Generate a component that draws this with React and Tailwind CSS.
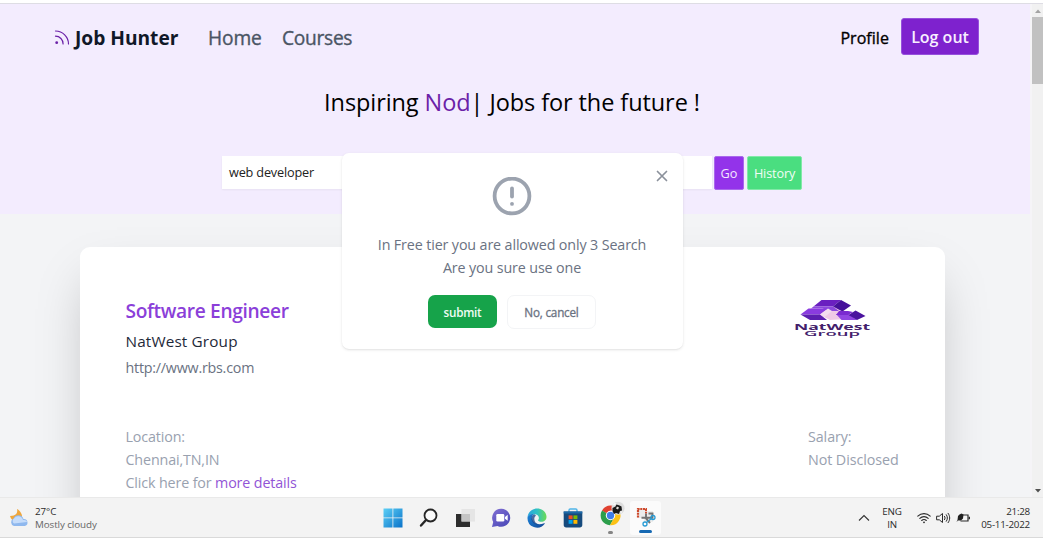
import React from 'react';

const RssIcon = () => (
  <svg viewBox="0 0 16 16" className="h-4 w-4" fill="none" stroke="#6b21a8" strokeWidth="1.2">
    <path d="M1.500 1A13 13 0 0 1 14.500 14M1.500 6.200a7.600 7.600 0 0 1 7.600 7.800" strokeLinecap="round" />
    <circle cx="2.700" cy="12.700" r="1.400" fill="#6b21a8" stroke="none" />
  </svg>
);

const NatWestLogo = () => (
  <svg viewBox="0 0 78 40" className="h-10 w-[78px]">
    <path d="m30 9 12-1 12 5 1 7-18 1-12-6z" fill="#efc9e6" />
    <path d="M28.500 1H48l-8 6.500H20.500z" fill="#6a1fc0" />
    <path d="M20.500 7.500H40l6 4.500H34l-4-2.500H18z" fill="#8d49dd" />
    <path d="m48 1 10 5.500-8.500 6L40 7.500z" fill="#45109a" />
    <path d="M15.500 9.500H35l-8 6H7.500z" fill="#8a3bdf" />
    <path d="M7.500 15.500H27l7 5.500H17z" fill="#5c1fb0" />
    <path d="m35 9.500 4 2.500-7.500 6-4.500-2.500z" fill="#f3dcef" />
    <path d="M43 15h12.500l8.500 6H48.500z" fill="#9146e2" />
    <path d="m62.500 11.500 10 5.500-8.500 4-8.500-5z" fill="#4a139e" />
    <path d="m46 12 9 0 5 1-5 3H43z" fill="#7a2ad0" />
    <text x="1" y="30.500" textLength="76" lengthAdjust="spacingAndGlyphs" fontSize="8" fontWeight="700" fill="#43206b" fontFamily="Open Sans, sans-serif">NatWest</text>
    <text x="11" y="37.300" textLength="56" lengthAdjust="spacingAndGlyphs" fontSize="7.200" fontWeight="600" fill="#43206b" fontFamily="Open Sans, sans-serif">Group</text>
  </svg>
);

const WeatherIcon = () => (
  <svg viewBox="0 0 20 20" className="h-5 w-5">
    <path d="M8 1c1 4-1 7-7 7 1 4 4 6 8 5 4-1 5-5 3-8-1-2-2-3-4-4z" fill="#f0a63a" />
    <path d="M5 18a4 4 0 0 1-.5-7.500A5.300 5.300 0 0 1 14.500 11 3.600 3.600 0 0 1 16 18z" fill="#8fb8ee" />
    <path d="M5 15.500a3 3 0 0 1 0-5 5 5 0 0 1 9 1.500c3-.5 4 1 4 2z" fill="#c5dcfa" />
  </svg>
);

const WindowsIcon = () => (
  <svg viewBox="0 0 20 20" className="h-5 w-5">
    <defs>
      <linearGradient id="win" x1="0" y1="0" x2="20" y2="20" gradientUnits="userSpaceOnUse">
        <stop stopColor="#5ed2f7" /><stop offset="1" stopColor="#0870c8" />
      </linearGradient>
    </defs>
    <path d="M.5.5h9v9h-9zM10.300.5h9.200v9h-9.200zM.5 10.300h9v9.200h-9zM10.300 10.300h9.200v9.200h-9.200z" fill="url(#win)" />
  </svg>
);

const SearchIcon = () => (
  <svg viewBox="0 0 20 20" className="h-5 w-5" fill="none" stroke="#262626" strokeLinecap="round">
    <circle cx="11.500" cy="7.500" r="6" strokeWidth="1.800" fill="#fafafa" />
    <path d="m7 12-5 5.500" strokeWidth="2.400" />
  </svg>
);

const TaskViewIcon = () => (
  <svg viewBox="0 0 20 20" className="h-5 w-5">
    <path d="M1 6h14v13H1z" fill="#2d2d2d" />
    <path d="M6.500 1H20v12.500H6.500z" fill="#e2e2e2" fillOpacity=".88" />
    <path d="M6.500 6H15v7.500H6.500z" fill="#c4c4c4" />
  </svg>
);

const ChatIcon = () => (
  <svg viewBox="0 0 20 20" className="h-5 w-5">
    <defs>
      <linearGradient id="chat" x1="3" y1="2" x2="16" y2="19" gradientUnits="userSpaceOnUse">
        <stop stopColor="#7c6bd0" /><stop offset="1" stopColor="#4b49b8" />
      </linearGradient>
    </defs>
    <path d="M10.500.8a9 9 0 1 1-4 17.200L1 19l1.200-5A9 9 0 0 1 10.500.8z" fill="url(#chat)" />
    <rect x="5.300" y="6" width="8" height="7.500" rx="1.300" fill="#fff" />
    <path d="m14 9 2.700-2.300v6L14 10.700z" fill="#fff" />
  </svg>
);

const EdgeIcon = () => (
  <svg viewBox="0 0 20 20" className="h-5 w-5">
    <defs>
      <linearGradient id="edgeA" x1="1" y1="5" x2="19" y2="6" gradientUnits="userSpaceOnUse">
        <stop stopColor="#2aa5dc" /><stop offset=".5" stopColor="#2fc2c4" /><stop offset="1" stopColor="#69d95a" />
      </linearGradient>
      <linearGradient id="edgeB" x1="1" y1="8" x2="14" y2="19" gradientUnits="userSpaceOnUse">
        <stop stopColor="#1b7fd4" /><stop offset="1" stopColor="#14509e" />
      </linearGradient>
    </defs>
    <path d="M.5 9.500C1 4.200 5 .5 10.200.5c5.500 0 9.300 4 9.300 8.200 0 3.200-2.300 5-5 5-2.200 0-3.500-.7-3.500-1.500 0-.6.900-.8.900-2.300 0-2-1.900-3.600-4.500-3.600C4 6.300 1.300 7.500.5 9.500z" fill="url(#edgeA)" />
    <path d="M.5 9.500C1.300 7 3.900 5.700 7 6c-2.300 1.400-2.800 4-1.500 6.600 1.700 3.300 6.500 4.800 11.700 2.600.5-.2.800.1.500.6A9.600 9.600 0 0 1 .5 9.500z" fill="url(#edgeB)" />
    <path d="M7.400 6.300c-3.300 1.200-3.700 4.300-2 7.100 1.500 2.300 4 3.300 6.900 3.100-3-.5-5-2.600-5-5.500 0-1.500.6-2.600 1.800-3.200z" fill="#103f87" fillOpacity=".75" />
  </svg>
);

const StoreIcon = () => (
  <svg viewBox="0 0 20 20" className="h-5 w-5">
    <path d="M6 5V2.200C6 1.400 6.400 1 7.200 1h5.600c.8 0 1.200.4 1.200 1.200V5" fill="none" stroke="#50b5e8" strokeWidth="1.400" />
    <path d="M.7 3.500h18.600V17c0 1.600-.9 2.500-2.500 2.500H3.200c-1.600 0-2.500-.9-2.500-2.500z" fill="#164a7d" />
    <path d="M.7 3.500h18.600v2H.7z" fill="#1c69a8" />
    <path d="M5.600 7.400h4v3.800h-4z" fill="#f25022" />
    <path d="M10.400 7.400h4v3.800h-4z" fill="#7fba00" />
    <path d="M5.600 12h4v3.800h-4z" fill="#00a4ef" />
    <path d="M10.400 12h4v3.800h-4z" fill="#ffb900" />
  </svg>
);

const ChromeIcon = () => (
  <svg viewBox="0 0 25 25" className="h-[25px] w-[25px]">
    <path d="M10.500 14.500 2 9.700a9.700 9.700 0 0 1 17-.2h-8.500z" fill="#e0402f" />
    <path d="M10.500 14.500 2 9.500A9.800 9.800 0 0 0 10 24.300l4.500-8z" fill="#2c9e4b" />
    <path d="m10.500 14.500 8.700-4.800A9.800 9.800 0 0 1 10 24.300l4.500-8z" fill="#fbc116" />
    <circle cx="10.500" cy="14.500" r="4.700" fill="#fff" />
    <circle cx="10.500" cy="14.500" r="3.700" fill="#3f7de8" />
    <circle cx="18" cy="7.200" r="6.500" fill="#dcdcdc" />
    <path d="m12.500 7 3-1.500 1-2 3 1 2 1 .5 4-2 .5-1 3-3-1-2 1-1.500-3z" fill="#171717" />
    <path d="m17 5.500 2 1-1 2-2-1z" fill="#e2ded8" />
    <path d="m12.500 4 2-2 2 .5-2 2zM20 11l2.500-1-1 2z" fill="#fafafa" />
  </svg>
);

const SnipIcon = () => (
  <svg viewBox="0 0 20 20" className="h-5 w-5" fill="none">
    <path d="M1 1h10v3h6v11H8v-4H1z" fill="#ececec" />
    <path d="M2 10.500V2h9" stroke="#cf4a2d" strokeWidth="2.200" strokeDasharray="2 .7" />
    <path d="M10 2v4.500" stroke="#cf4a2d" strokeWidth="2" strokeDasharray="2 .7" />
    <path d="M10 6.500v5l4 4.500M5.500 10.800h8l3 0V6.500h-4" stroke="#747474" strokeWidth="1.900" />
    <circle cx="17" cy="10.500" r="2" stroke="#279bd4" strokeWidth="1.300" />
    <circle cx="9" cy="17" r="2" stroke="#279bd4" strokeWidth="1.300" />
    <path d="m10.500 15.500 5-4" stroke="#279bd4" strokeWidth="1.300" />
  </svg>
);

const WifiIcon = () => (
  <svg viewBox="0 0 14 12" className="h-3 w-3.5" fill="none" stroke="#2b2b2b" strokeWidth="1.1" strokeLinecap="round">
    <path d="M.8 4.200c3.500-3.500 8.900-3.500 12.400 0M2.800 6.400c2.400-2.400 6-2.400 8.400 0M4.700 8.500c1.300-1.300 3.300-1.300 4.600 0" />
    <circle cx="7" cy="10.300" r=".9" fill="#2b2b2b" stroke="none" />
  </svg>
);

const SoundIcon = () => (
  <svg viewBox="0 0 15 12" className="h-3 w-[15px]" fill="none" stroke="#2b2b2b" strokeWidth="1" strokeLinecap="round" strokeLinejoin="round">
    <path d="M1 4.200h2.300L6.500 1.500v9L3.300 7.800H1zM8.500 4.300c.8 1 .8 2.400 0 3.400M10.300 2.700c1.500 2 1.500 4.600 0 6.600M12.100 1.300c2.200 3 2.200 6.400 0 9.400" />
  </svg>
);

const BatteryIcon = () => (
  <svg viewBox="0 0 15 12" className="h-3 w-[15px]" fill="none">
    <path d="M7 3h5v6H4.500" stroke="#2b2b2b" strokeWidth="1.200" />
    <path d="M13.300 4.800v2.400" stroke="#2b2b2b" strokeWidth="1.400" />
    <path d="M2 4 3.500 2.500 5.500 1.500 7.500 2.500 7 6.500 5 8.500 2 8.500.5 10l1-2z" fill="#202020" />
  </svg>
);

const Header = () => (
  <header className="flex h-[210px] shrink-0 flex-col bg-[#f3ecfe]">
    <nav className="flex h-[67px] items-center pr-[51px] pl-[54px]">
      <RssIcon />
      <span className="mt-px ml-[5px] w-[133px] text-[19.200px] font-bold tracking-[-0.020px] text-gray-900">Job Hunter</span>
      <span className="mt-px w-[74px] text-[19.200px] tracking-[-0.150px] text-gray-600 [-webkit-text-stroke:0.35px_#4b5563]">Home</span>
      <span className="mt-px text-[19.200px] tracking-[-0.300px] text-gray-600 [-webkit-text-stroke:0.35px_#4b5563]">Courses</span>
      <span className="ml-auto text-[16px] tracking-[0.050px] text-black [-webkit-text-stroke:0.35px_black]">Profile</span>
      <button className="ml-3 h-[37px] w-[78px] -translate-y-px rounded-[3px] border border-[#9650dc] bg-[#7e22ce] text-[16px] font-semibold text-[#f8efff]">Log out</button>
    </nav>
    <h1 className="mt-[14px] pr-[6px] text-center text-[23.500px] leading-[34px] tracking-[-0.080px] text-black">
      Inspiring <span className="text-[#6b21a8]">Nod</span>| Jobs for the future !
    </h1>
    <form className="mt-[37px] flex items-start pl-[222px]">
      <div className="flex h-[33px] w-[490px] items-center bg-white pt-px pl-[7px] text-[12.700px] tracking-[-0.180px] text-[#222] shadow-xs">web developer</div>
      <button type="button" className="ml-0.5 h-[34px] w-[30px] rounded-[2px] border border-[#a968ec] bg-[#9333ea] pt-px text-[12.700px] text-[#f3e8ff]">Go</button>
      <button type="button" className="ml-[3px] h-[34px] w-[55px] rounded-[2px] border border-[#82e9a8] bg-[#4ade80] pt-px text-[12.700px] tracking-[-0.150px] text-[#f0fdf4]">History</button>
    </form>
  </header>
);

const JobCard = () => (
  <article className="mt-[33px] ml-20 flex h-[400px] w-[865px] shrink-0 justify-between rounded-[10px] bg-white pr-[46px] pl-[45.500px] shadow-2xl">
    <div className="pt-[49px]">
      <h2 className="text-[19.200px] leading-[30px] font-semibold tracking-[-0.370px] text-[#8b3fd9]">Software Engineer</h2>
      <p className="text-[15.300px] leading-[31px] tracking-[0.150px] text-gray-800">NatWest Group</p>
      <p className="text-[14.300px] leading-[22px] tracking-[-0.230px] text-gray-500">http://www.rbs.com</p>
      <div className="mt-[46px] text-[14.300px] leading-[23px] tracking-[-0.140px] text-gray-400">
        <p>Location:</p>
        <p>Chennai,TN,IN</p>
        <p>Click here for <a className="text-[#9254d6]">more details</a></p>
      </div>
    </div>
    <div className="flex w-[91px] flex-col pt-[52px]">
      <div className="-ml-[15px]"><NatWestLogo /></div>
      <div className="mt-[86px] text-[14.300px] leading-[23px] tracking-[-0.080px] whitespace-nowrap text-gray-400">
        <p>Salary:</p>
        <p>Not Disclosed</p>
      </div>
    </div>
  </article>
);

const Modal = () => (
  <div role="dialog" className="absolute top-[153px] left-[342px] flex h-[196px] w-[341px] flex-col items-center rounded-[7px] bg-white pt-6 pr-px shadow">
    <svg viewBox="0 0 12 12" className="absolute top-[17px] right-[15px] h-3 w-3" fill="none" stroke="#8b919b" strokeWidth="1.700" strokeLinecap="round">
      <path d="m1.500 1.500 9 9m0-9-9 9" />
    </svg>
    <svg viewBox="0 0 40 40" className="h-10 w-10" fill="none" stroke="#9ca3af" strokeWidth="3.800" strokeLinecap="round">
      <circle cx="20" cy="19" r="17.400" />
      <path d="M20 11.500v8" />
      <path d="M20 26.800v.1" />
    </svg>
    <p className="mt-4 text-center text-[14.300px] leading-[23px] tracking-[-0.130px] text-gray-500">In Free tier you are allowed only 3 Search<br />Are you sure use one</p>
    <div className="mt-4 flex gap-[10px]">
      <button className="h-[33px] w-[69px] rounded-[7px] bg-[#16a34a] pt-0.5 text-[11.700px] font-semibold tracking-[-0.250px] text-[#effcf3]">submit</button>
      <button className="h-[34px] w-[89px] rounded-[7px] border border-gray-100 bg-white pt-px text-[11.700px] tracking-[-0.200px] text-gray-500 [-webkit-text-stroke:0.3px_#6b7280]">No, cancel</button>
    </div>
  </div>
);

const Scrollbar = () => (
  <div className="flex w-[13px] shrink-0 flex-col items-center border-l-2 border-[#f5f4f7] bg-[#f1f1f1]">
    <svg viewBox="0 0 12 13" className="h-[13px] w-3"><path d="m3 9 3-3.500L9 9z" fill="#a3a3a3" /></svg>
    <div className="h-[67px] w-full bg-[#c1c1c1]" />
    <svg viewBox="0 0 12 13" className="mt-auto h-[13px] w-3"><path d="m3 5 3 3.500L9 5z" fill="#505050" /></svg>
  </div>
);

const Taskbar = () => (
  <footer className="grid h-[41px] shrink-0 grid-cols-[380px_1fr_190px] border-t border-b border-t-[#e9e9e9] border-b-[#d9d9d9] bg-[#f3f3f3] text-[9.800px] leading-[13px] text-[#2b2b2b]">
    <div className="flex items-center pl-[9px]">
      <WeatherIcon />
      <div className="pl-[6px] tracking-[-0.080px]"><p>27°C</p><p className="text-[#666]">Mostly cloudy</p></div>
    </div>
    <div className="flex items-center gap-[16.200px] pl-[2.500px]">
      <WindowsIcon />
      <SearchIcon />
      <TaskViewIcon />
      <ChatIcon />
      <EdgeIcon />
      <StoreIcon />
      <div className="flex h-full flex-col items-center pt-[3px]">
        <ChromeIcon />
        <span className="mt-[5px] -ml-1 h-[3px] w-[5px] rounded-full bg-[#858585]" />
      </div>
      <div className="-ml-[10.500px] flex h-[34px] w-[31px] flex-col items-center rounded-[3px] bg-[#fbfbfb] pt-1.5">
        <SnipIcon />
        <span className="mt-[3px] h-[3px] w-[13px] rounded-full bg-[#1769b3]" />
      </div>
    </div>
    <div className="flex items-center pr-[13px]">
      <svg viewBox="0 0 12 8" className="ml-[5px] h-2 w-3" fill="none" stroke="#333" strokeWidth="1.100"><path d="m1 6.500 5-5 5 5" /></svg>
      <div className="ml-2.5 w-[24px] text-center tracking-[-0.200px]">ENG<br />IN</div>
      <div className="ml-[13px] flex items-center gap-[5px]"><WifiIcon /><SoundIcon /><BatteryIcon /></div>
      <div className="ml-auto text-right tracking-[-0.230px] whitespace-nowrap">21:28<br />05-11-2022</div>
    </div>
  </footer>
);

export default function App() {
  return (
    <div className="relative flex h-[543px] w-[1043px] flex-col overflow-hidden bg-white font-['Open_Sans','Noto_Sans',sans-serif]">
      <div className="h-1 shrink-0 border-b border-[#dedde4]" />
      <main className="flex h-[493px] shrink-0 overflow-hidden">
        <div className="flex min-w-0 flex-1 flex-col overflow-hidden bg-[#f3f4f6]">
          <Header />
          <JobCard />
        </div>
        <Scrollbar />
      </main>
      <Taskbar />
      <Modal />
    </div>
  );
}
